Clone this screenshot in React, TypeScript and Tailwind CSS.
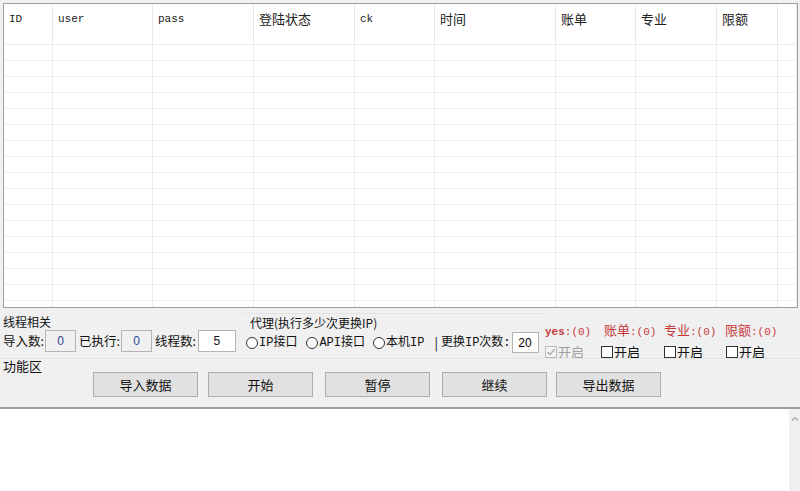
import React from 'react';

const cjk = "font-['Noto_Sans_CJK_SC','Microsoft_YaHei',sans-serif]";
const mono = "font-['Liberation_Mono','Noto_Sans_CJK_SC',monospace]";

const columns = [
  { label: 'ID', mono: true },
  { label: 'user', mono: true },
  { label: 'pass', mono: true },
  { label: '登陆状态', mono: false },
  { label: 'ck', mono: true },
  { label: '时间', mono: false },
  { label: '账单', mono: false },
  { label: '专业', mono: false },
  { label: '限额', mono: false },
  { label: '', mono: false },
];

const gridCols =
  'grid grid-cols-[49px_100px_101px_101px_80px_121px_80px_81px_61px_1fr]';

const rows = Array.from({ length: 17 }, (_, i) => i);

const DataTable: React.FC = () => (
  <div className="h-[305px] border border-[#a0a0a0] bg-white overflow-hidden">
    {/* Header */}
    <div className={`${gridCols} h-[41px] border-b border-[#ececec]`}>
      {columns.map((col, i) => (
        <div
          key={i}
          className={`border-r border-[#e8e8e8] px-[5px] pt-[7px] leading-[16px] text-[#222] ${
            col.mono ? `${mono} text-[11px]` : `${cjk} text-[13px]`
          }`}
        >
          {col.label}
        </div>
      ))}
    </div>
    {/* Empty rows */}
    {rows.map((r) => (
      <div key={r} className={`${gridCols} h-[16px] border-b border-[#f0f0f0]`}>
        {columns.map((_, i) => (
          <div key={i} className="border-r border-[#ececec]" />
        ))}
      </div>
    ))}
  </div>
);

const NumBox: React.FC<{ value: string; width: string; white?: boolean }> = ({ value, width, white }) => (
  <div
    className={`${width} shrink-0 h-[22px] border border-[#b4b4b4] flex items-center justify-center text-[12px] font-['Liberation_Sans',sans-serif] ${
      white ? 'bg-white text-[#111]' : 'bg-[#f0f0f0] text-[#2b4a9a]'
    }`}
  >
    {value}
  </div>
);

const Radio: React.FC<{ label: string }> = ({ label }) => (
  <div className="flex items-center gap-[1px] whitespace-nowrap">
    <span className="w-[12px] h-[12px] rounded-full border border-[#333] bg-white" />
    <span className={`${mono} text-[12px] text-[#111]`}>{label}</span>
  </div>
);

const Check: React.FC<{ disabled?: boolean }> = ({ disabled }) => (
  <div className={`flex items-center gap-[1px] whitespace-nowrap ${cjk} text-[13px] leading-[14px]`}>
    {disabled ? (
      <span className="w-[12px] h-[12px] border border-[#bcbcbc] bg-[#f4f4f4] flex items-center justify-center">
        <svg width="10" height="10" viewBox="0 0 10 10">
          <path d="M1.5 5.2 L4 7.6 L8.6 2.2" fill="none" stroke="#a8a8a8" strokeWidth="1.4" />
        </svg>
      </span>
    ) : (
      <span className="w-[12px] h-[12px] border border-[#333] bg-white" />
    )}
    <span className={disabled ? 'text-[#a0a0a0]' : 'text-[#111]'}>开启</span>
  </div>
);

const buttons = [
  { label: '导入数据', ml: 'ml-[93px]' },
  { label: '开始', ml: 'ml-[10px]' },
  { label: '暂停', ml: 'ml-[12px]' },
  { label: '继续', ml: 'ml-[12px]' },
  { label: '导出数据', ml: 'ml-[9px]' },
];

const stats = [
  { key: 'yes', label: 'yes', mono: true, w: 'w-[59px]' },
  { key: 'bill', label: '账单', mono: false, w: 'w-[60px]' },
  { key: 'pro', label: '专业', mono: false, w: 'w-[61px]' },
  { key: 'limit', label: '限额', mono: false, w: 'w-[61px]' },
];

export default function App() {
  return (
    <div className={`w-[800px] h-[491px] bg-[#f0f0f0] overflow-hidden flex flex-col ${cjk}`}>
      {/* Table */}
      <div className="pt-[3px] pl-[3px] pr-[2px]">
        <DataTable />
      </div>

      {/* Settings */}
      <div className="h-[50px] flex">
        {/* 线程相关 */}
        <div className="w-[240px] pl-[3px] flex flex-col">
          <div className="mt-[7px] text-[12px] leading-[14px] text-[#111]">线程相关</div>
          <div className="mt-[1px] flex items-center text-[12.5px] text-[#111] whitespace-nowrap">
            <span>导入数:</span>
            <span className="ml-[1px]">
              <NumBox value="0" width="w-[31px]" />
            </span>
            <span className="ml-[3px]">已执行:</span>
            <span className="ml-[1px]">
              <NumBox value="0" width="w-[31px]" />
            </span>
            <span className="ml-[3px]">线程数:</span>
            <span className="ml-[2px]">
              <NumBox value="5" width="w-[38px]" white />
            </span>
          </div>
        </div>

        {/* 代理 */}
        <div className="w-[300px] ml-[3px] flex flex-col border-t border-[#e2e2e2] mt-[5px]">
          <div className="mt-[2px] pl-[7px] text-[12px] leading-[14px] text-[#111]">代理(执行多少次更换IP)</div>
          <div className="mt-[2px] pl-[3px] flex items-center whitespace-nowrap">
            <Radio label="IP接口" />
            <div className="ml-[9px]">
              <Radio label="API接口" />
            </div>
            <div className="ml-[8px]">
              <Radio label="本机IP" />
            </div>
            <span className="ml-[10px] text-[13px] text-[#111]">|</span>
            <span className={`ml-[3px] ${mono} text-[12px] text-[#111]`}>更换IP次数:</span>
            <div className="ml-[1px] w-[27px] h-[21px] shrink-0 border border-[#b4b4b4] bg-white flex items-center justify-center text-[12px] font-['Liberation_Sans',sans-serif]">
              20
            </div>
          </div>
        </div>

        {/* 统计 */}
        <div className="ml-[2px] flex flex-col pt-[15px]">
          <div className="flex items-center text-[#c83a3a] text-[12px] leading-[14px]">
            {stats.map((s) => (
              <span key={s.key} className={`${s.w} whitespace-nowrap`}>
                <span className={s.mono ? `${mono} text-[11px] font-bold` : 'text-[13px]'}>{s.label}</span>
                <span className={`${mono} text-[11px]`}>:(0)</span>
              </span>
            ))}
          </div>
          <div className="mt-[6px] flex items-center">
            <div className="w-[56px]">
              <Check disabled />
            </div>
            <div className="w-[63px]">
              <Check />
            </div>
            <div className="w-[62px]">
              <Check />
            </div>
            <Check />
          </div>
        </div>
      </div>

      {/* 功能区 */}
      <div className="h-[49px] flex flex-col border-t border-[#e4e4e4]">
        <div className="pl-[3px] text-[13px] leading-[13px] text-[#111]">功能区</div>
        <div className="flex">
          {buttons.map((b) => (
            <button
              key={b.label}
              className={`${b.ml} w-[105px] h-[25px] bg-[#e1e1e1] border border-[#adadad] text-[13px] text-[#111] ${cjk}`}
            >
              {b.label}
            </button>
          ))}
        </div>
      </div>

      {/* Log area */}
      <div className="flex-1 flex border-t-2 border-[#a0a0a0] bg-white">
        <div className="flex-1" />
        <div className="w-[11px] bg-[#f0f0f0] flex flex-col items-center pt-[7px]">
          <svg width="8" height="5" viewBox="0 0 8 5">
            <path d="M1 4.5 L4 1.5 L7 4.5" fill="none" stroke="#a6a6a6" strokeWidth="1.2" />
          </svg>
        </div>
      </div>
    </div>
  );
}
